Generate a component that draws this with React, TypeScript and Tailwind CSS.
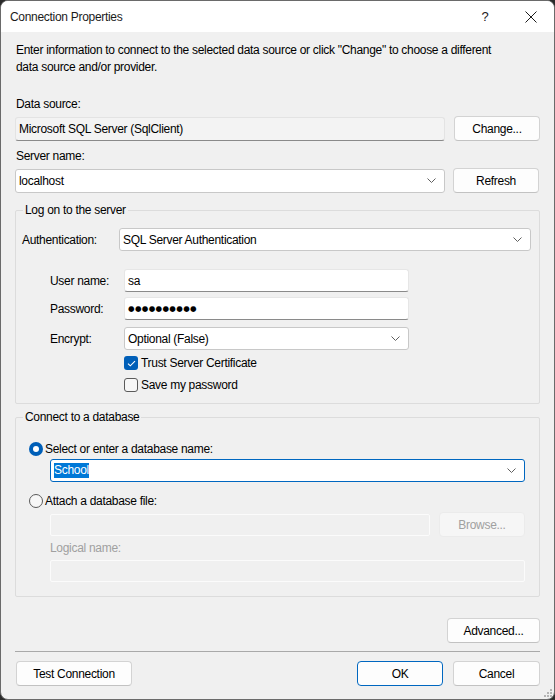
import React from 'react';

const font = "font-['Segoe_UI','Liberation_Sans',Arial,sans-serif]";

function Chevron() {
  return (
    <svg width="9" height="5" viewBox="0 0 9 5" fill="none">
      <path d="M0.5 0.5L4.5 4.5L8.5 0.5" stroke="#5f5f5f" strokeWidth="1" />
    </svg>
  );
}

function Btn({
  children,
  className = '',
  primary = false,
  disabled = false,
}: {
  children: React.ReactNode;
  className?: string;
  primary?: boolean;
  disabled?: boolean;
}) {
  const border = primary
    ? 'border-[#0067c0]'
    : disabled
    ? 'border-[#ebebeb]'
    : 'border-[#d3d3d3] border-b-[#c2c2c2]';
  const fill = disabled ? 'bg-[#f6f6f6] text-[#a0a0a0]' : 'bg-[#fdfdfd] text-black';
  return (
    <div className={`h-[25px] shrink-0 flex items-center justify-center rounded-[4px] border ${border} ${fill} ${className}`}>
      {children}
    </div>
  );
}

function TextBox({ children, className = '' }: { children?: React.ReactNode; className?: string }) {
  return (
    <div className={`h-[23px] flex items-center pl-[3px] bg-white border border-[#e6e6e6] border-b-[#8a8a8a] rounded-[3px] ${className}`}>
      {children}
    </div>
  );
}

function Combo({ children, className = '', focused = false }: { children?: React.ReactNode; className?: string; focused?: boolean }) {
  return (
    <div
      className={`h-[23px] flex items-center justify-between pl-[3px] pr-[8px] bg-white border rounded-[3px] ${
        focused ? 'border-[#0067c0]' : 'border-[#c8c8c8]'
      } ${className}`}
    >
      <div className="flex items-center">{children}</div>
      <Chevron />
    </div>
  );
}

function Check({ checked, label }: { checked: boolean; label: string }) {
  return (
    <div className="flex items-center h-[16px]">
      {checked ? (
        <div className="w-[14px] h-[14px] rounded-[3px] bg-[#005fb8] flex items-center justify-center">
          <svg width="9" height="7" viewBox="0 0 9 7" fill="none">
            <path d="M1 3.6L3.3 5.8L8 1.2" stroke="white" strokeWidth="1.1" />
          </svg>
        </div>
      ) : (
        <div className="w-[14px] h-[14px] rounded-[3px] border border-[#5a5a5a] bg-[#f7f7f7]" />
      )}
      <span className="ml-[3px]">{label}</span>
    </div>
  );
}

function Radio({ checked, label }: { checked: boolean; label: string }) {
  return (
    <div className="flex items-center h-[16px]">
      {checked ? (
        <div className="w-[14px] h-[14px] rounded-full bg-[#005fb8] flex items-center justify-center">
          <div className="w-[6px] h-[6px] rounded-full bg-white" />
        </div>
      ) : (
        <div className="w-[14px] h-[14px] rounded-full border border-[#5a5a5a] bg-[#f7f7f7]" />
      )}
      <span className="ml-[2px]">{label}</span>
    </div>
  );
}

export default function App() {
  return (
    <div className={`w-[555px] h-[700px] bg-[#2a2a2a] ${font} text-[12px] leading-[16px] tracking-[-0.3px] text-black`}>
      <div className="relative w-full h-full rounded-[8px] border border-[#6a6a6a] overflow-hidden bg-[#f0f0f0] flex flex-col">
        {/* Title bar */}
        <div className="h-[31px] shrink-0 bg-white flex items-center justify-between pl-[9px]">
          <span className="text-[#1b1b1b]">Connection Properties</span>
          <div className="flex items-center h-full">
            <span className="w-[46px] text-center text-[13px] text-[#1b1b1b]">?</span>
            <div className="w-[46px] flex items-center justify-center">
              <svg width="12" height="12" viewBox="0 0 12 12" fill="none">
                <path d="M0.5 0.5L11.5 11.5M11.5 0.5L0.5 11.5" stroke="#1b1b1b" strokeWidth="1" />
              </svg>
            </div>
          </div>
        </div>

        {/* Body */}
        <div className="flex-1 flex flex-col px-[14px] pt-[10px]">
          <p className="leading-[17px] pl-[1px]">
            Enter information to connect to the selected data source or click "Change" to choose a different
            <br />
            data source and/or provider.
          </p>

          <div className="mt-[20px] pl-[1px]">Data source:</div>
          <div className="mt-[4px] h-[25px] flex items-center">
            <div className="w-[430px] h-[24px] flex items-center pl-[3px] bg-[#f3f3f3] border border-[#e3e3e3] border-b-[#8a8a8a] rounded-[3px]">
              Microsoft SQL Server (SqlClient)
            </div>
            <Btn className="ml-[9px] w-[86px]">Change...</Btn>
          </div>

          <div className="mt-[7px] pl-[1px]">Server name:</div>
          <div className="mt-[4px] h-[25px] flex items-center">
            <Combo className="w-[430px] h-[24px]">localhost</Combo>
            <Btn className="ml-[8px] w-[86px]">Refresh</Btn>
          </div>

          {/* Log on to the server */}
          <fieldset className="mt-[9px] border border-[#dcdcdc] rounded-[2px] pl-[6px] pr-[8px] pt-[10px] pb-[10px]">
            <legend className="ml-[1px] px-[2px] leading-[16px]">Log on to the server</legend>
            <div className="h-[23px] flex items-center">
              <span className="w-[97px]">Authentication:</span>
              <Combo className="flex-1">SQL Server Authentication</Combo>
            </div>

            <div className="pl-[28px]">
              <div className="mt-[18px] h-[23px] flex items-center">
                <span className="w-[74px]">User name:</span>
                <TextBox className="w-[285px]">sa</TextBox>
              </div>
              <div className="mt-[5px] h-[23px] flex items-center">
                <span className="w-[74px]">Password:</span>
                <TextBox className="w-[285px]">
                  <span className="text-[7.5px] tracking-[0.35px] font-['DejaVu_Sans',sans-serif] leading-none">●●●●●●●●●●</span>
                </TextBox>
              </div>
              <div className="mt-[7px] h-[23px] flex items-center">
                <span className="w-[74px]">Encrypt:</span>
                <Combo className="w-[285px]">Optional (False)</Combo>
              </div>
              <div className="pl-[74px]">
                <div className="mt-[5px]">
                  <Check checked label="Trust Server Certificate" />
                </div>
                <div className="mt-[6px]">
                  <Check checked={false} label="Save my password" />
                </div>
              </div>
            </div>
          </fieldset>

          {/* Connect to a database */}
          <fieldset className="mt-[5px] border border-[#dcdcdc] rounded-[2px] pl-[6px] pr-[14px] pt-[16px] pb-[14px]">
            <legend className="ml-[1px] px-[2px] leading-[16px]">Connect to a database</legend>
            <div className="pl-[7px]">
              <Radio checked label="Select or enter a database name:" />
              <div className="pl-[21px] mt-[2px]">
                <Combo focused className="w-full">
                  <span className="bg-[#0078d7] text-white leading-[15px]">School</span>
                </Combo>
              </div>
              <div className="mt-[11px]">
                <Radio checked={false} label="Attach a database file:" />
              </div>
              <div className="pl-[21px]">
                <div className="mt-[4px] h-[23px] flex items-center">
                  <div className="w-[380px] h-[22px] bg-[#f0f0f0] border border-[#fbfbfb] rounded-[2px]" />
                  <Btn disabled className="ml-[9px] w-[86px] h-[23px]">
                    Browse...
                  </Btn>
                </div>
                <div className="mt-[4px] text-[#a0a0a0]">Logical name:</div>
                <div className="mt-[4px] h-[22px] bg-[#f0f0f0] border border-[#fbfbfb] rounded-[2px]" />
              </div>
            </div>
          </fieldset>

          <div className="mt-[21px] flex justify-end">
            <Btn className="w-[93px]">Advanced...</Btn>
          </div>

          <div className="mt-[8px] h-[1px] bg-[#a9a9a9]" />

          <div className="mt-[9px] flex items-center">
            <Btn className="w-[116px] ml-[1px]">Test Connection</Btn>
            <div className="flex-1" />
            <Btn primary className="w-[86px]">
              OK
            </Btn>
            <Btn className="ml-[10px] w-[87px]">Cancel</Btn>
          </div>
        </div>

        {/* Resize grip */}
        <svg className="absolute right-[2px] bottom-[2px]" width="8" height="8" viewBox="0 0 8 8">
          <rect x="6" y="0" width="2" height="2" fill="#b5b5b5" />
          <rect x="3" y="3" width="2" height="2" fill="#b5b5b5" />
          <rect x="6" y="3" width="2" height="2" fill="#b5b5b5" />
          <rect x="0" y="6" width="2" height="2" fill="#b5b5b5" />
          <rect x="3" y="6" width="2" height="2" fill="#b5b5b5" />
          <rect x="6" y="6" width="2" height="2" fill="#b5b5b5" />
        </svg>
      </div>
    </div>
  );
}
